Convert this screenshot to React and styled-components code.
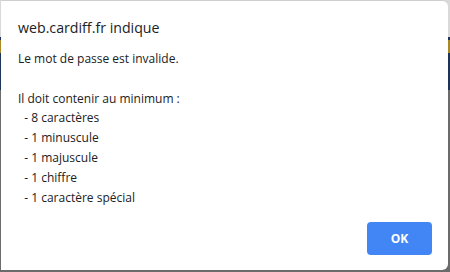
import React from "react";
import styled, { createGlobalStyle } from "styled-components";

const Global = createGlobalStyle`
  html, body {
    margin: 0;
    height: 272px;
    overflow: hidden;
  }
  body {
    background:
      linear-gradient(
        to bottom,
        #d9d9d9 0px,
        #d9d9d9 37px,
        #1e3358 37px,
        #1e3358 40px,
        #a8892a 40px,
        #a8892a 53px,
        #1e3358 53px,
        #1e3358 90px,
        #6b6b6b 90px,
        #6b6b6b 100%
      );
    font-family: "Segoe UI", "Open Sans", "Noto Sans", sans-serif;
  }
`;

const Dialog = styled.div`
  box-sizing: border-box;
  width: 447px;
  height: 270px;
  margin-left: 1px;
  background: #fff;
  border-top: 1px solid #cfcfcf;
  border-radius: 0 6px 6px 0;
  padding: 17px 16px 14px 17px;
  display: flex;
  flex-direction: column;
`;

const Title = styled.h1`
  margin: 0;
  font-size: 14.2px;
  font-weight: 400;
  line-height: 20px;
  color: #202124;
`;

const Message = styled.p`
  margin: 11px 0 0;
  font-size: 12px;
  line-height: 19.8px;
  color: #202124;
  white-space: pre-wrap;
  flex: 1;
`;

const Footer = styled.div`
  display: flex;
  justify-content: flex-end;
`;

const Button = styled.button`
  width: 65px;
  height: 33px;
  margin-bottom: 1px;
  border: none;
  border-radius: 4px;
  background: #4285f4;
  color: #fff;
  font-family: inherit;
  font-size: 12px;
  font-weight: 700;
  cursor: pointer;
`;

const text = `Le mot de passe est invalide.

Il doit contenir au minimum :
  - 8 caractères
  - 1 minuscule
  - 1 majuscule
  - 1 chiffre
  - 1 caractère spécial`;

export default function App() {
  return (
    <>
      <Global />
      <Dialog>
        <Title>web.cardiff.fr indique</Title>
        <Message>{text}</Message>
        <Footer>
          <Button>OK</Button>
        </Footer>
      </Dialog>
    </>
  );
}
